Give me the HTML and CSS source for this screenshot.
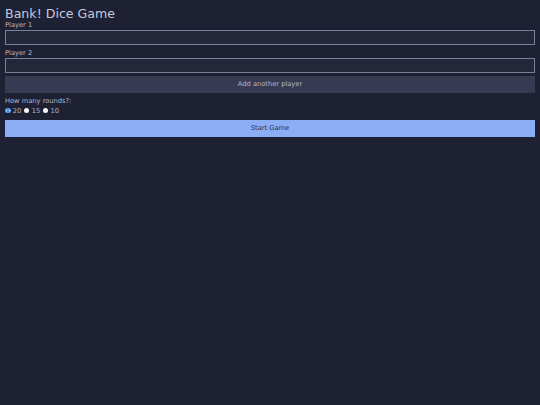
FILE: index.html
```html
<!DOCTYPE html>
<html>
<head>
<meta charset="utf-8">
<link rel="stylesheet" href="styles.css">
</head>
<body>
<main class="app">
  <h1 class="title">Bank! Dice Game</h1>
  <div class="field">
    <label class="label" for="p1">Player 1</label>
    <input class="input" id="p1" type="text">
  </div>
  <div class="field">
    <label class="label" for="p2">Player 2</label>
    <input class="input" id="p2" type="text">
  </div>
  <button class="btn btn-add" type="button">Add another player</button>
  <div class="rounds">
    <div class="label">How many rounds?:</div>
    <div class="radios">
      <label class="opt"><input class="radio" type="radio" name="r" checked><span>20</span></label>
      <label class="opt"><input class="radio" type="radio" name="r"><span>15</span></label>
      <label class="opt"><input class="radio" type="radio" name="r"><span>10</span></label>
    </div>
  </div>
  <button class="btn btn-start" type="button">Start Game</button>
</main>
</body>
</html>
```
FILE: styles.css
```css
html, body {
  margin: 0;
  padding: 0;
  background: #1e2133;
  height: 100%;
}
body {
  font-family: "DejaVu Sans", Verdana, sans-serif;
  color: #c3c8dc;
}
.app {
  padding: 6px 5px 0 5px;
  display: flex;
  flex-direction: column;
}
.title {
  margin: 0;
  font-size: 12.6px;
  line-height: 15px;
  font-weight: normal;
  color: #c3c8dc;
}
.field {
  display: flex;
  flex-direction: column;
}
.field + .field {
  margin-top: 4px;
}
.label {
  display: block;
  font-size: 6.7px;
  line-height: 8px;
  margin-bottom: 1px;
  color: #b3b8cb;
}
.input {
  box-sizing: border-box;
  height: 15px;
  width: 100%;
  margin: 0;
  padding: 0 3px;
  background: #24273a;
  border: 1px solid #7a809b;
  border-radius: 0;
  color: #cad3f5;
  font-family: inherit;
  font-size: 6.7px;
  outline: none;
}
.btn {
  box-sizing: border-box;
  width: 100%;
  border: none;
  margin: 0;
  padding: 0;
  font-family: inherit;
  font-size: 6.7px;
  border-radius: 0;
}
.btn-add {
  margin-top: 3px;
  height: 16.5px;
  background: #363a52;
  color: #b3b8cb;
}
.rounds {
  margin-top: 4.5px;
}
.rounds .label {
  margin-bottom: 1.5px;
}
.radios {
  display: flex;
  align-items: center;
  height: 8px;
  font-size: 6.7px;
  line-height: 8px;
  color: #b3b8cb;
}
.opt {
  display: flex;
  align-items: center;
  margin-right: 2.6px;
}
.radio {
  -webkit-appearance: none;
  appearance: none;
  width: 5.5px;
  height: 5.5px;
  margin: 0 2.3px 0 0;
  border-radius: 50%;
  background: #f4f4f8;
  border: none;
}
.radio:checked {
  background: radial-gradient(circle, #3f7fd8 0 1.1px, #e6eefb 1.2px 1.7px, #5d9cec 1.8px);
}
.btn-start {
  margin-top: 5px;
  height: 17px;
  background: #8aadf4;
  color: #2a2e42;
}
```
